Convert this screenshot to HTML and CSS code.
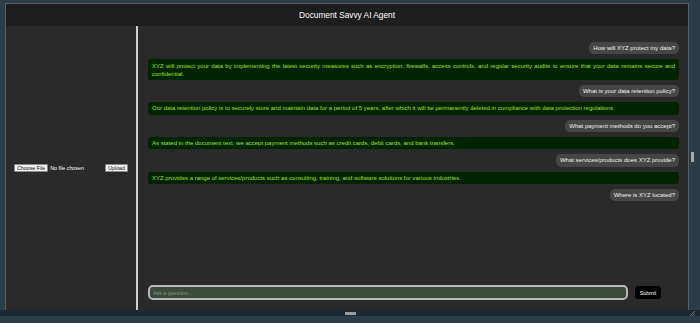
FILE: index.html
```html
<!DOCTYPE html>
<html lang="en">

<head>
    <meta charset="UTF-8">
    <meta name="viewport" content="width=device-width, initial-scale=1.0">
    <title>Document Savvy AI Agent</title>
    <link rel="stylesheet" href="styles.css">
</head>

<body>
    <div class="page">
        <div class="frame">
            <div class="window">
                <div class="header">Document Savvy AI Agent</div>

                <div class="main">
                    <div class="sidebar">
                        <div class="file-pick">
                            <span class="btn-light">Choose File</span>
                            <span class="file-name">No file chosen</span>
                        </div>
                        <span class="btn-light">Upload</span>
                    </div>

                    <div class="chat">
                        <div class="messages">
                            <div class="question">How will XYZ protect my data?</div>
                            <div class="answer">XYZ will protect your data by implementing the latest security measures such as encryption, firewalls, access controls, and regular security audits to ensure that your data remains secure and confidential.</div>
                            <div class="question">What is your data retention policy?</div>
                            <div class="answer">Our data retention policy is to securely store and maintain data for a period of 5 years, after which it will be permanently deleted in compliance with data protection regulations.</div>
                            <div class="question">What payment methods do you accept?</div>
                            <div class="answer">As stated in the document text, we accept payment methods such as credit cards, debit cards, and bank transfers.</div>
                            <div class="question">What services/products does XYZ provide?</div>
                            <div class="answer">XYZ provides a range of services/products such as consulting, training, and software solutions for various industries.</div>
                            <div class="question">Where is XYZ located?</div>
                        </div>

                        <div class="ask-row">
                            <input type="text" class="ask-input" placeholder="Ask a question...">
                            <button type="button" class="submit-btn">Submit</button>
                        </div>
                    </div>
                </div>
            </div>
        </div>

        <div class="side-scroll">
            <div class="thumb"></div>
        </div>
    </div>

    <div class="strip">
        <div class="handle"></div>
        <svg class="grip" width="6" height="5" viewBox="0 0 6 5">
            <path d="M1 5 L6 0 M3.5 5 L6 2.5" stroke="#8a8a8a" stroke-width="0.8" />
        </svg>
    </div>
</body>

</html>
```

FILE: styles.css
```css
body {
    margin: 0;
    padding: 0;
    background-color: #2c3d4a;
    font-family: "Liberation Sans", Arial, sans-serif;
    width: 700px;
    height: 323px;
    overflow: hidden;
}

.page {
    display: flex;
    height: 310px;
}

.frame {
    width: 689px;
    padding: 3px 0 0 5px;
    box-sizing: border-box;
}

.window {
    height: 307px;
    border: 1px solid #5b5f62;
    border-bottom: none;
    box-sizing: border-box;
    display: flex;
    flex-direction: column;
    background-color: #2a2a2a;
}

.header {
    height: 22px;
    flex-shrink: 0;
    background-color: #1e1e1e;
    color: #ffffff;
    font-size: 8.3px;
    display: flex;
    align-items: center;
    justify-content: center;
}

.main {
    flex: 1;
    display: flex;
}

.sidebar {
    width: 132px;
    border-right: 2px solid #cfcfcf;
    display: flex;
    align-items: center;
    justify-content: space-between;
    padding: 0 8px 0 8px;
    box-sizing: border-box;
    flex-shrink: 0;
}

.file-pick {
    display: flex;
    align-items: center;
    gap: 2px;
}

.btn-light {
    background-color: #efefef;
    color: #111;
    border: 1px solid #8a8a8a;
    border-radius: 1px;
    font-size: 5.3px;
    line-height: 6px;
    padding: 0 2px;
}

.file-name {
    color: #ffffff;
    font-size: 5.3px;
}

.chat {
    flex: 1;
    display: flex;
    flex-direction: column;
    justify-content: space-between;
    padding: 16px 9px 10px 10px;
}

.messages {
    display: flex;
    flex-direction: column;
    gap: 5px;
}

.question {
    align-self: flex-end;
    background-color: #464646;
    color: #f2f2f2;
    font-size: 6px;
    line-height: 8px;
    padding: 2.2px 4px;
    border-radius: 5px;
}

.answer {
    background-color: #002400;
    color: #9be22d;
    font-size: 6px;
    line-height: 8px;
    padding: 2.2px 4px;
    border-radius: 3px;
    text-align: justify;
}

.ask-row {
    display: flex;
    align-items: center;
    gap: 7px;
}

.ask-input {
    width: 480px;
    height: 15px;
    box-sizing: border-box;
    border: 2px solid #b9b9b9;
    border-radius: 5px;
    background-color: #3a4a3b;
    color: #ddd;
    font-family: "Liberation Sans", Arial, sans-serif;
    font-size: 5.3px;
    padding: 0 3px;
    outline: none;
}

.ask-input::placeholder {
    color: #8a958a;
}

.submit-btn {
    width: 26px;
    height: 13px;
    border: none;
    border-radius: 3px;
    background-color: #000000;
    color: #ffffff;
    font-family: "Liberation Sans", Arial, sans-serif;
    font-size: 5.3px;
    padding: 0;
}

.side-scroll {
    width: 11px;
    padding-top: 152px;
    box-sizing: border-box;
}

.thumb {
    width: 3px;
    height: 10px;
    margin-left: 2px;
    background-color: #a8a8a8;
}

.strip {
    height: 6px;
    background-color: #1e2a33;
    display: flex;
    justify-content: center;
    align-items: center;
    position: relative;
}

.handle {
    width: 11px;
    height: 3px;
    background-color: #9a9a9a;
}

.grip {
    position: absolute;
    right: 5px;
    bottom: 0;
}
```
